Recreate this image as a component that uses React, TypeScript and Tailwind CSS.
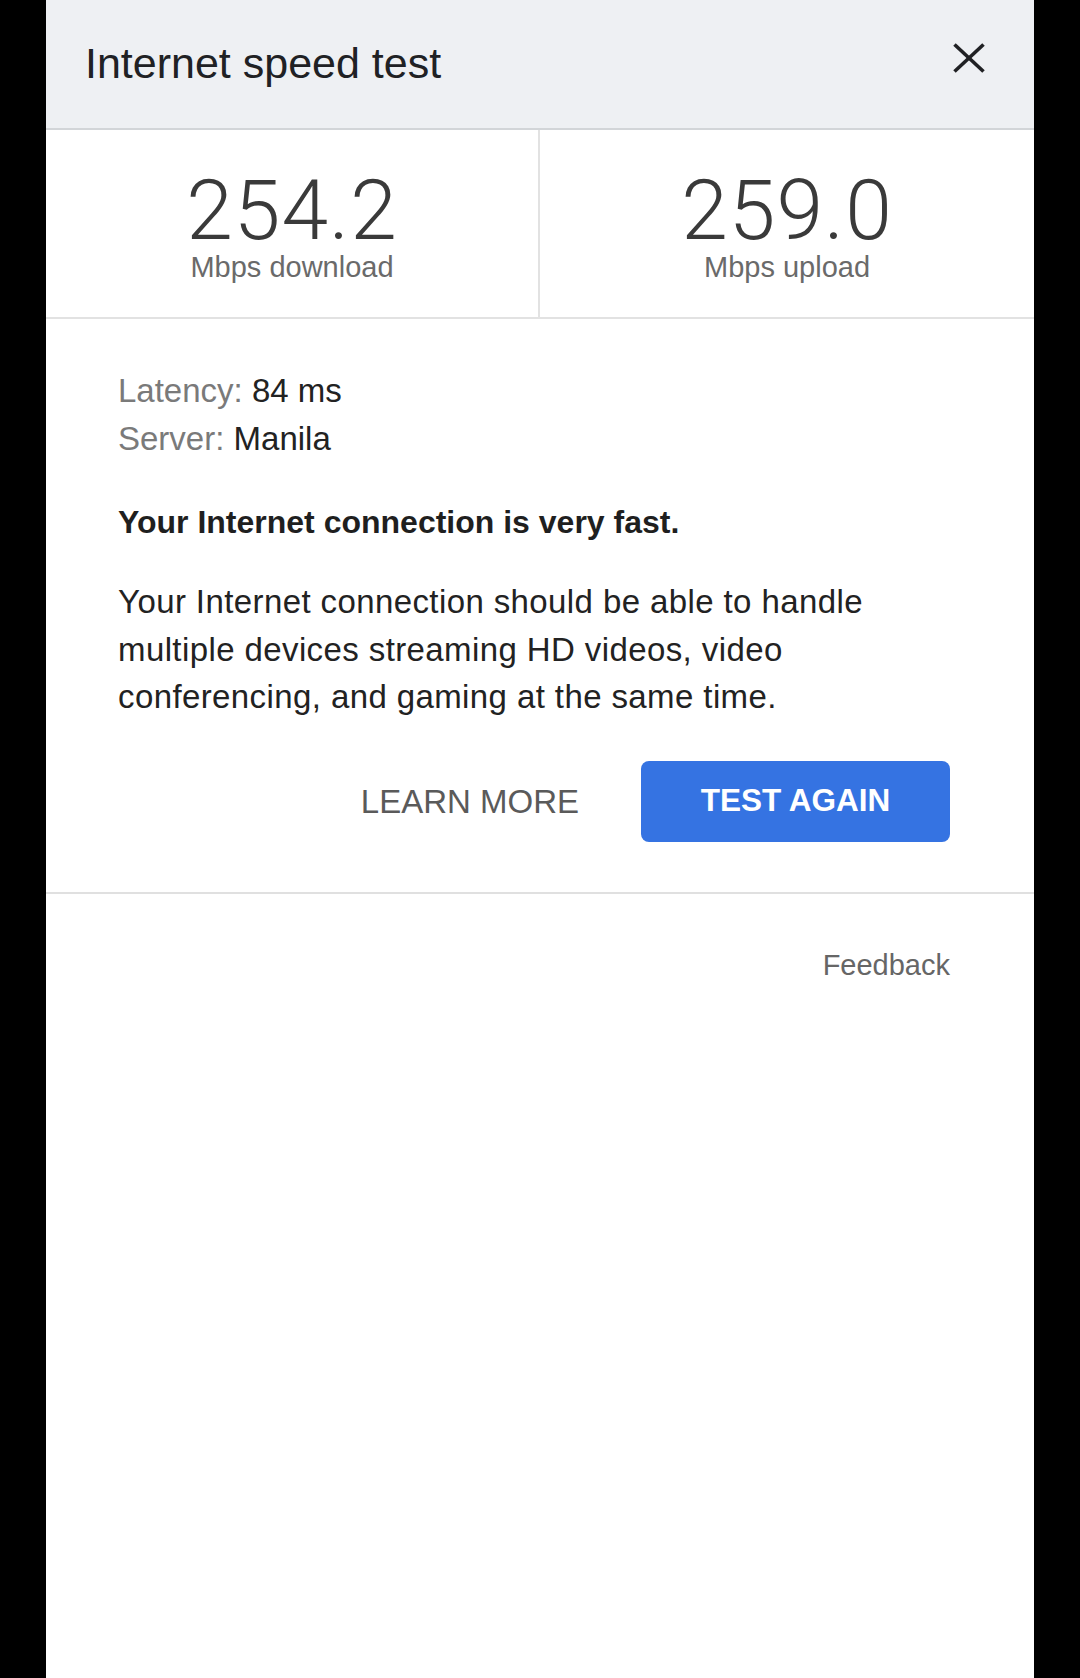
import React from "react";

export default function App() {
  const sans = { fontFamily: '"Liberation Sans", Arial, sans-serif' };
  const light = { fontFamily: 'Roboto, "Liberation Sans", sans-serif' };
  return (
    <div className="min-h-[1678px] w-full bg-black px-[46px]" style={sans}>
      <div className="flex min-h-[1678px] flex-col bg-white">
        {/* Header */}
        <div className="flex h-[130px] items-center justify-between border-b-2 border-[#d2d5d8] bg-[#eef0f3] pl-[39px] pr-[48px]">
          <h1 className="pb-[2px] text-[43px] leading-none font-normal text-[#202124]">Internet speed test</h1>
          <svg width="34" height="32" viewBox="0 0 34 32" className="mb-[12px]" aria-label="Close">
            <line x1="2.5" y1="2.5" x2="31.5" y2="29.5" stroke="#202124" strokeWidth="3.6" />
            <line x1="31.5" y1="2.5" x2="2.5" y2="29.5" stroke="#202124" strokeWidth="3.6" />
          </svg>
        </div>

        {/* Stats */}
        <div className="grid grid-cols-2 border-b-2 border-[#e2e2e2]">
          <div className="flex flex-col items-center border-r-2 border-[#e2e2e2] pt-[39px] pb-[35px]">
            <div className="text-[84px] leading-none font-light tracking-[1px] text-[#3a3a3a]" style={light}>254.2</div>
            <div className="text-[29px] leading-none text-[#6a6a6a]">Mbps download</div>
          </div>
          <div className="flex flex-col items-center pt-[39px] pb-[35px]">
            <div className="text-[84px] leading-none font-light tracking-[1px] text-[#3a3a3a]" style={light}>259.0</div>
            <div className="text-[29px] leading-none text-[#6a6a6a]">Mbps upload</div>
          </div>
        </div>

        {/* Body */}
        <div className="border-b-2 border-[#e0e0e0] pl-[72px] pr-[84px] pt-[48px] pb-[50px]">
          <div className="text-[33px] leading-[48px]">
            <div>
              <span className="text-[#7a7a7a]">Latency: </span>
              <span className="text-[#222222]">84 ms</span>
            </div>
            <div>
              <span className="text-[#7a7a7a]">Server: </span>
              <span className="text-[#222222]">Manila</span>
            </div>
          </div>
          <p className="mt-[35px] text-[32px] leading-[48px] font-bold text-[#1f1f1f]">
            Your Internet connection is very fast.
          </p>
          <p className="mt-[32px] text-[33px] leading-[47.5px] tracking-[0.4px] text-[#222222]">
            Your Internet connection should be able to handle multiple devices streaming HD videos, video conferencing, and gaming at the same time.
          </p>
          <div className="mt-[40px] flex items-center justify-end gap-[62px]">
            <button className="text-[33px] leading-none text-[#5a5a5a]">LEARN MORE</button>
            <button className="flex h-[81px] w-[309px] items-center justify-center rounded-[8px] bg-[#3573e2] text-[31.5px] leading-none font-bold text-white">
              TEST AGAIN
            </button>
          </div>
        </div>

        {/* Footer */}
        <div className="flex justify-end pr-[84px] pt-[57px]">
          <span className="text-[29px] leading-none text-[#666666]">Feedback</span>
        </div>
      </div>
    </div>
  );
}
